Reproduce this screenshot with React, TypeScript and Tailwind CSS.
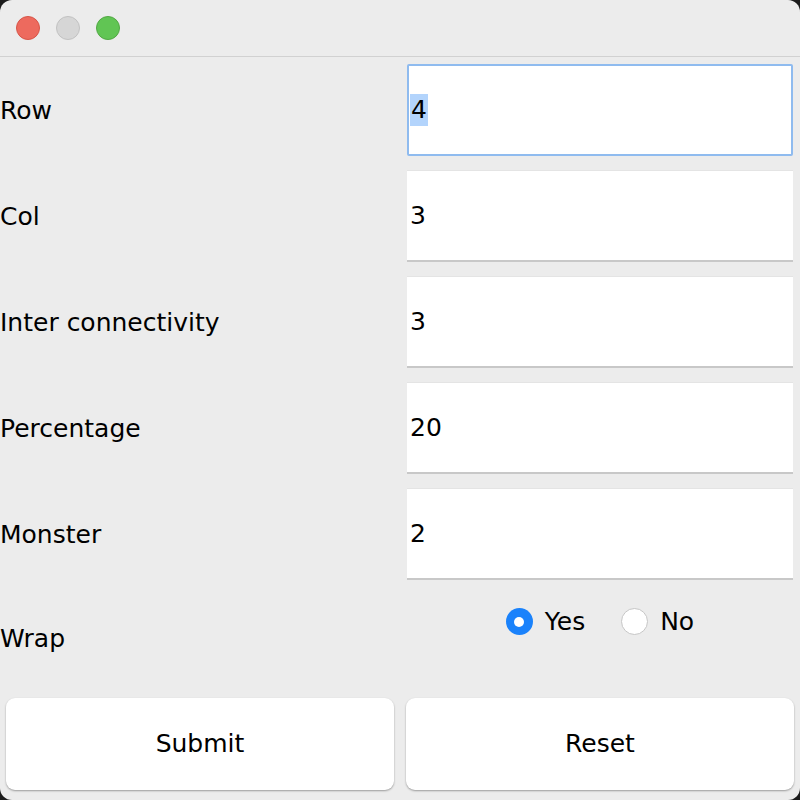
import React from "react";

const fields = [
  { label: "Row", value: "4", focused: true },
  { label: "Col", value: "3" },
  { label: "Inter connectivity", value: "3" },
  { label: "Percentage", value: "20" },
  { label: "Monster", value: "2" },
];

export default function App() {
  return (
    <div className="w-[800px] h-[800px] bg-[#1c1c1c]" style={{ fontFamily: '"DejaVu Sans", sans-serif' }}>
      <div className="w-full h-full rounded-[12px] overflow-hidden bg-[#ececec] flex flex-col text-black">
        {/* title bar */}
        <div className="h-[57px] shrink-0 border-b border-[#d1d1d1] flex items-center gap-[16px] pl-[16px]">
          <div className="w-[24px] h-[24px] rounded-full bg-[#ed6a5e] border border-[#d75548]" />
          <div className="w-[24px] h-[24px] rounded-full bg-[#d6d6d6] border border-[#c2c2c2]" />
          <div className="w-[24px] h-[24px] rounded-full bg-[#61c554] border border-[#52a844]" />
        </div>

        <div className="flex flex-col">
          {fields.map((f) => (
            <div key={f.label} className="grid grid-cols-[407px_386px] h-[106px] items-center">
              <div className="text-[25px] leading-none">{f.label}</div>
              <div
                className={`h-[92px] bg-white flex items-center text-[25px] ${
                  f.focused
                    ? "border-2 border-[#8fbbef] rounded-[2px] pl-[1px]"
                    : "border-b-2 border-[#c8c8c8] border-t border-t-[#e4e4e4] pl-[3px]"
                }`}
              >
                <span className={f.focused ? "bg-[#b3d4fc] px-[1px] leading-[32px]" : ""}>{f.value}</span>
              </div>
            </div>
          ))}

          {/* wrap row */}
          <div className="grid grid-cols-[407px_386px] h-[111px]">
            <div className="text-[25px] leading-none pt-[39px]">Wrap</div>
            <div className="flex items-start justify-center gap-[36px] pt-[16px] text-[25px]">
              <label className="flex items-center gap-[12px]">
                <span className="w-[27px] h-[27px] rounded-full bg-[#1a82fb] flex items-center justify-center">
                  <span className="w-[10px] h-[10px] rounded-full bg-white" />
                </span>
                <span>Yes</span>
              </label>
              <label className="flex items-center gap-[12px]">
                <span className="w-[27px] h-[27px] rounded-full bg-white border border-[#c6c6c6]" />
                <span>No</span>
              </label>
            </div>
          </div>

          {/* buttons */}
          <div className="flex gap-[12px] px-[6px]">
            <button className="w-[388px] h-[92px] bg-white rounded-[9px] shadow-[0_1px_2px_rgba(0,0,0,0.35)] text-[25px]">
              Submit
            </button>
            <button className="w-[388px] h-[92px] bg-white rounded-[9px] shadow-[0_1px_2px_rgba(0,0,0,0.35)] text-[25px]">
              Reset
            </button>
          </div>
        </div>
      </div>
    </div>
  );
}
